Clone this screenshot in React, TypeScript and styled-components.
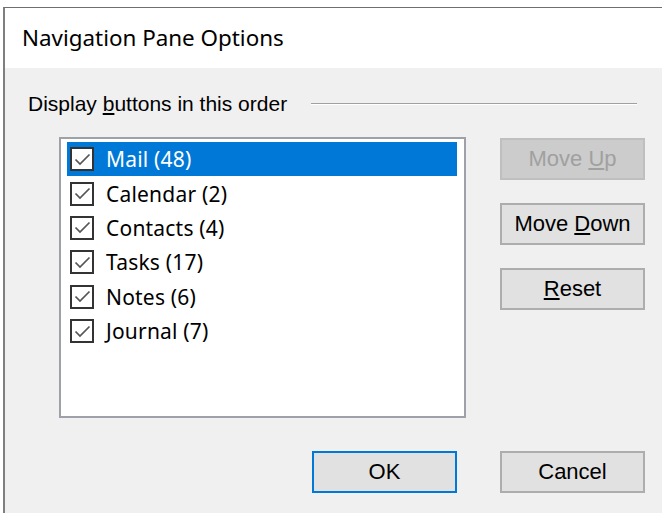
import React from "react";
import styled, { createGlobalStyle } from "styled-components";

const items = [
  { id: "mail", label: "Mail (48)", selected: true },
  { id: "calendar", label: "Calendar (2)" },
  { id: "contacts", label: "Contacts (4)" },
  { id: "tasks", label: "Tasks (17)" },
  { id: "notes", label: "Notes (6)" },
  { id: "journal", label: "Journal (7)" },
];

const GlobalStyle = createGlobalStyle`
  html, body {
    margin: 0;
    padding: 0;
    background: #ffffff;
  }
`;

function CheckMark() {
  return (
    <svg width="19" height="19" viewBox="0 0 19 19">
      <path d="M2.5 9.5 L7 14 L16.5 4.5" fill="none" stroke="#555555" strokeWidth="1.7" />
    </svg>
  );
}

function App() {
  return (
    <Page>
      <GlobalStyle />
      <Window>
        <TitleBar>Navigation Pane Options</TitleBar>
        <Body>
          <GroupHeader>
            <GroupLabel>
              Display <u>b</u>uttons in this order
            </GroupLabel>
            <EtchedLine />
          </GroupHeader>

          <Content>
            <ListBox>
              {items.map((item) => (
                <Row key={item.id} $selected={!!item.selected}>
                  <CheckBox>
                    <CheckMark />
                  </CheckBox>
                  <RowText>{item.label}</RowText>
                </Row>
              ))}
            </ListBox>

            <SideButtons>
              <Button disabled>
                Move <u>U</u>p
              </Button>
              <Button>
                Move <u>D</u>own
              </Button>
              <Button>
                <u>R</u>eset
              </Button>
            </SideButtons>
          </Content>

          <Footer>
            <Button $default>OK</Button>
            <Button>Cancel</Button>
          </Footer>
        </Body>
      </Window>
    </Page>
  );
}

export default App;

const Page = styled.div`
  width: 662px;
  height: 513px;
  display: flex;
  flex-direction: column;
  background: #ffffff;
  overflow: hidden;
`;

const Window = styled.div`
  flex: 1;
  display: flex;
  flex-direction: column;
  margin: 7px 0 0 3px;
  border-top: 1px solid #6f6f6f;
  border-left: 2px solid #7f7f7f;
`;

const TitleBar = styled.div`
  height: 60px;
  display: flex;
  align-items: center;
  padding: 0 0 2px 17px;
  box-sizing: border-box;
  background: #ffffff;
  font-family: "Noto Sans", sans-serif;
  font-size: 22.4px;
  color: #000000;
`;

const Body = styled.div`
  flex: 1;
  display: flex;
  flex-direction: column;
  padding: 24px 17px 0 23px;
  background: #f0f0f0;
  font-family: "Liberation Sans", Arial, sans-serif;
  font-size: 21px;
  color: #000000;
`;

const GroupHeader = styled.div`
  display: flex;
  align-items: center;
  gap: 24px;
  height: 24px;
  padding-right: 8px;
`;

const GroupLabel = styled.span`
  white-space: nowrap;
`;

const EtchedLine = styled.div`
  flex: 1;
  height: 1px;
  background: #a0a0a0;
  border-bottom: 1px solid #ffffff;
`;

const Content = styled.div`
  display: flex;
  align-items: flex-start;
  gap: 34px;
  margin: 21px 0 0 31px;
`;

const ListBox = styled.div`
  width: 407px;
  height: 281px;
  box-sizing: border-box;
  padding: 3px 7px 0 6px;
  background: #ffffff;
  border: 2px solid #9ea2a8;
`;

const Row = styled.div<{ $selected: boolean }>`
  display: flex;
  align-items: center;
  gap: 12px;
  height: 34.4px;
  padding-left: 3px;
  background: ${({ $selected }) => ($selected ? "#0078d7" : "transparent")};
  color: ${({ $selected }) => ($selected ? "#ffffff" : "#000000")};
`;

const CheckBox = styled.span`
  width: 24px;
  height: 24px;
  box-sizing: border-box;
  display: flex;
  align-items: center;
  justify-content: center;
  background: #ffffff;
  border: 2px solid #333333;
`;

const RowText = styled.span`
  font-family: "Noto Sans", sans-serif;
  font-size: 21px;
  letter-spacing: 0.2px;
`;

const SideButtons = styled.div`
  display: flex;
  flex-direction: column;
  gap: 23px;
  margin-top: 1px;
`;

const Button = styled.button<{ $default?: boolean }>`
  width: 145px;
  height: 42px;
  padding: 0;
  font-family: "Liberation Sans", Arial, sans-serif;
  font-size: 22px;
  color: #000000;
  background: #e1e1e1;
  border: ${({ $default }) => ($default ? "2px solid #0078d7" : "2px solid #adadad")};
  border-radius: 0;

  &:disabled {
    background: #cccccc;
    border-color: #bfbfbf;
    color: #a0a0a0;
  }
`;

const Footer = styled.div`
  display: flex;
  justify-content: flex-end;
  gap: 43px;
  margin-top: 33px;
`;
